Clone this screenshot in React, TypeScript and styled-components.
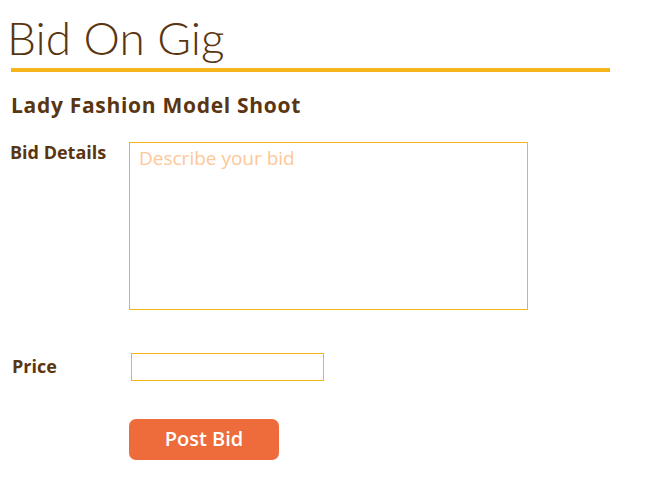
import { FC } from 'react';
import styled, { createGlobalStyle } from 'styled-components';

const GlobalStyle = createGlobalStyle`
	body {
		margin: 0;
		background: #ffffff;
		font-family: 'Open Sans', 'Liberation Sans', sans-serif;
	}
`;

const brown = '#5a3511';
const gold = '#f5b419';

const StyledPage = styled.div`
	width: 651px;
	padding: 10px 0 0 0;
	box-sizing: border-box;
`;

const StyledTitle = styled.h1`
	margin: 0 0 0 7px;
	font-family: Lato, 'Open Sans', sans-serif;
	font-size: 46px;
	font-weight: 300;
	line-height: 56px;
	color: ${brown};
`;

const StyledRule = styled.div`
	margin: 2px 0 0 11px;
	width: 599px;
	height: 4px;
	background-color: ${gold};
`;

const StyledGigName = styled.h2`
	margin: 20px 0 0 11px;
	font-size: 21px;
	font-weight: 700;
	line-height: 26px;
	letter-spacing: 0.7px;
	color: ${brown};
`;

const StyledRow = styled.div<{ top: number; labelLeft: number }>`
	display: flex;
	align-items: flex-start;
	margin-top: ${({ top }) => top}px;
	padding-left: ${({ labelLeft }) => labelLeft}px;
`;

const StyledLabel = styled.label<{ width: number; offset: number }>`
	flex: 0 0 ${({ width }) => width}px;
	white-space: nowrap;
	margin-top: ${({ offset }) => offset}px;
	font-size: 18px;
	font-weight: 700;
	line-height: 20px;
	color: ${brown};
`;

const StyledTextarea = styled.textarea`
	display: block;
	box-sizing: border-box;
	width: 399px;
	height: 168px;
	margin: 0;
	padding: 5px 9px;
	border: 1px solid ${gold};
	border-radius: 0;
	outline: none;
	resize: none;
	font-family: inherit;
	font-size: 19px;
	line-height: 20px;
	color: ${brown};
	&::placeholder {
		color: #fdc797;
	}
`;

const StyledInput = styled.input`
	display: block;
	box-sizing: border-box;
	width: 193px;
	height: 28px;
	margin: 0;
	padding: 2px 8px;
	border: 1px solid ${gold};
	border-radius: 0;
	outline: none;
	font-family: inherit;
	font-size: 16px;
	color: ${brown};
`;

const StyledButton = styled.button`
	display: flex;
	justify-content: center;
	align-items: center;
	box-sizing: border-box;
	width: 150px;
	height: 41px;
	margin: 38px 0 0 129px;
	padding: 0 0 2px 0;
	border: 0;
	border-radius: 7px;
	background-color: #ee6c3b;
	color: #ffffff;
	font-family: inherit;
	font-size: 20px;
	font-weight: 600;
	cursor: pointer;
`;

const App: FC = () => (
	<StyledPage>
		<GlobalStyle />
		<StyledTitle>Bid On Gig</StyledTitle>
		<StyledRule />
		<StyledGigName>Lady Fashion Model Shoot</StyledGigName>

		<StyledRow top={24} labelLeft={10}>
			<StyledLabel width={119} offset={0}>
				Bid Details
			</StyledLabel>
			<StyledTextarea placeholder="Describe your bid" />
		</StyledRow>

		<StyledRow top={43} labelLeft={12}>
			<StyledLabel width={119} offset={3}>
				Price
			</StyledLabel>
			<StyledInput type="text" />
		</StyledRow>

		<StyledButton type="button">Post Bid</StyledButton>
	</StyledPage>
);

export default App;
